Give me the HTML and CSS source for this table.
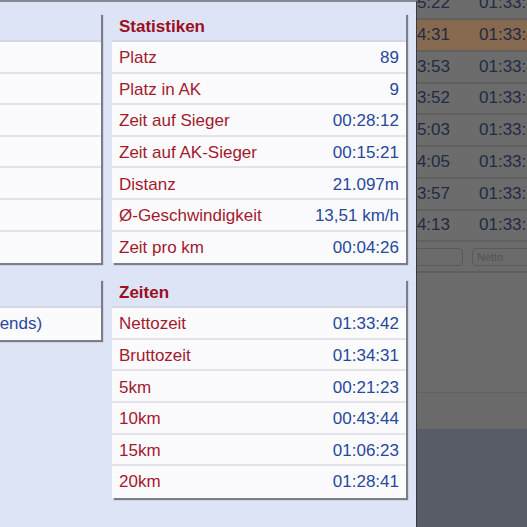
FILE: index.html
```html
<!DOCTYPE html>
<html lang="de">
<head>
<meta charset="utf-8">
<title>Ergebnis</title>
<link rel="stylesheet" href="styles.css">
</head>
<body>
<div class="screen">
  <div class="backdrop">
    <div class="res-row"><span class="c1">01:35:22</span><span class="c2">01:33:42</span></div>
    <div class="res-row hl"><span class="c1">01:34:31</span><span class="c2">01:33:42</span></div>
    <div class="res-row"><span class="c1">01:33:53</span><span class="c2">01:33:45</span></div>
    <div class="res-row"><span class="c1">01:33:52</span><span class="c2">01:33:47</span></div>
    <div class="res-row"><span class="c1">01:35:03</span><span class="c2">01:33:49</span></div>
    <div class="res-row"><span class="c1">01:34:05</span><span class="c2">01:33:50</span></div>
    <div class="res-row"><span class="c1">01:33:57</span><span class="c2">01:33:52</span></div>
    <div class="res-row"><span class="c1">01:34:13</span><span class="c2">01:33:55</span></div>
    <div class="filter-row">
      <input class="filt f1" type="text" placeholder="Brutto">
      <input class="filt f2" type="text" placeholder="Netto">
    </div>
    <div class="pager"></div>
    <div class="pager2"></div>
    <div class="footer"></div>
  </div>

  <div class="modal">
    <div class="modal-inner">
      <section class="panel">
        <div class="ph">Teilnehmer</div>
        <div class="pr left"><span class="lbl key">Name</span><span class="lv">Max M.</span></div>
        <div class="pr left"><span class="lbl key">Startnr.</span><span class="lv">1234</span></div>
        <div class="pr left"><span class="lbl key">Jahrgang</span><span class="lv">1980</span></div>
        <div class="pr left"><span class="lbl key">Geschlecht</span><span class="lv">M</span></div>
        <div class="pr left"><span class="lbl key">AK</span><span class="lv">M35</span></div>
        <div class="pr left"><span class="lbl key">Nation</span><span class="lv">GER</span></div>
        <div class="pr left"><span class="lbl key">Ort</span><span class="lv">Köln</span></div>
      </section>

      <section class="panel">
        <div class="ph">Statistiken</div>
        <div class="pr"><span class="lbl">Platz</span><span class="val">89</span></div>
        <div class="pr"><span class="lbl">Platz in AK</span><span class="val">9</span></div>
        <div class="pr"><span class="lbl">Zeit auf Sieger</span><span class="val">00:28:12</span></div>
        <div class="pr"><span class="lbl">Zeit auf AK-Sieger</span><span class="val">00:15:21</span></div>
        <div class="pr"><span class="lbl">Distanz</span><span class="val">21.097m</span></div>
        <div class="pr"><span class="lbl">Ø-Geschwindigkeit</span><span class="val">13,51 km/h</span></div>
        <div class="pr"><span class="lbl">Zeit pro km</span><span class="val">00:04:26</span></div>
      </section>

      <section class="panel">
        <div class="ph">Verein</div>
        <div class="pr left"><span class="val-left">Verein: LSG Lauftreff (Friends)</span></div>
      </section>

      <section class="panel">
        <div class="ph">Zeiten</div>
        <div class="pr"><span class="lbl">Nettozeit</span><span class="val">01:33:42</span></div>
        <div class="pr"><span class="lbl">Bruttozeit</span><span class="val">01:34:31</span></div>
        <div class="pr"><span class="lbl">5km</span><span class="val">00:21:23</span></div>
        <div class="pr"><span class="lbl">10km</span><span class="val">00:43:44</span></div>
        <div class="pr"><span class="lbl">15km</span><span class="val">01:06:23</span></div>
        <div class="pr"><span class="lbl">20km</span><span class="val">01:28:41</span></div>
      </section>
    </div>
  </div>
</div>
</body>
</html>
```

FILE: styles.css
```css
html, body {
  margin: 0;
  padding: 0;
}
body {
  width: 527px;
  height: 527px;
  overflow: hidden;
  font-family: "Liberation Sans", Arial, sans-serif;
  background: #585c64;
}
.screen {
  position: relative;
  width: 527px;
  height: 527px;
  overflow: hidden;
}

/* dimmed results table behind the dialog */
.backdrop {
  display: flex;
  flex-direction: column;
  margin-top: -11.75px;
  background: #6b6b6b;
}
.res-row {
  box-sizing: border-box;
  height: 31.75px;
  display: flex;
  align-items: center;
  border-bottom: 2px solid #606060;
  background: #6c6c6c;
  color: #222b45;
  font-size: 17px;
}
.res-row.hl {
  background: #86694e;
}
.res-row .c1 {
  width: 450px;
  text-align: right;
  flex: none;
}
.res-row .c2 {
  margin-left: 29px;
  white-space: nowrap;
}
.filter-row {
  box-sizing: border-box;
  height: 31px;
  display: flex;
  align-items: center;
  gap: 9px;
  padding-left: 380px;
  border-bottom: 2px solid #5e5e5e;
  background: #6b6b6b;
}
.filt {
  box-sizing: border-box;
  height: 18px;
  border: 1px solid #595959;
  border-radius: 4px;
  background: #6b6b6b;
  font-family: "Liberation Sans", Arial, sans-serif;
  font-size: 11px;
  padding: 0 4px;
  outline: none;
}
.filt::placeholder {
  color: #545454;
}
.f1 { width: 83px; }
.f2 { width: 80px; }
.pager {
  height: 119px;
  border-bottom: 1px solid #606060;
  background: #6b6b6b;
}
.pager2 {
  height: 36px;
  background: #6a6a6a;
}
.footer {
  height: 100px;
  background: #585c64;
}

/* dialog */
.modal {
  position: absolute;
  left: 0;
  top: 0;
  width: 417px;
  height: 527px;
  box-sizing: border-box;
  background: #dde4f6;
  border-top: 2px solid #858a94;
  border-right: 1px solid #353a44;
  overflow: hidden;
}
.modal-inner {
  margin-left: -193px;
  padding-top: 11px;
  display: grid;
  grid-template-columns: 294px 294px;
  column-gap: 11px;
  row-gap: 16px;
  align-items: start;
}
.panel {
  box-shadow: 2px 2px 1px #7b7e86;
}
.ph {
  box-sizing: border-box;
  height: 29px;
  padding: 1px 7px 0;
  display: flex;
  align-items: center;
  border-bottom: 2px solid #d2d7e2;
  font-size: 17px;
  font-weight: bold;
  color: #9c0f22;
}
.pr {
  box-sizing: border-box;
  height: 31.6px;
  padding: 3px 7px 0;
  display: flex;
  align-items: center;
  justify-content: space-between;
  background: #fbfbfe;
  border-bottom: 2px solid #e3e4ea;
  font-size: 17px;
}
.pr:last-child {
  border-bottom: none;
  padding-top: 1px;
}
.pr.left {
  justify-content: flex-start;
}
.lbl {
  color: #a3192d;
}
.key {
  width: 110px;
}
.val {
  color: #28489a;
}
.lv {
  color: #28489a;
}
.val-left {
  color: #28489a;
  white-space: nowrap;
  margin-left: -3px;
}
```
